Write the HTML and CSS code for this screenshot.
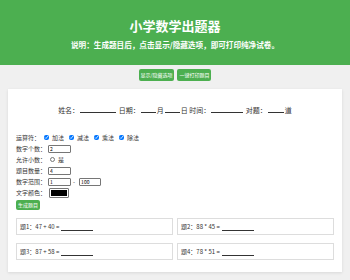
FILE: index.html
```
<!DOCTYPE html>
<html lang="zh-CN">
<head>
  <meta charset="utf-8">
  <meta name="viewport" content="width=device-width, initial-scale=1.0">
  <title>小学数学出题器</title>
  <link rel="stylesheet" href="styles.css">
</head>
<body>
  <div class="header">
    <h1>小学数学出题器</h1>
    <p>说明：生成题目后，点击显示/隐藏选项，即可打印纯净试卷。</p>
  </div>

  <div class="toolbar">
    <button class="button">显示/隐藏选项</button>
    <button class="button">一键打印题目</button>
  </div>

  <div class="card">
    <div class="info-line">
      姓名：<span class="blank w36"></span>
      日期：<span class="blank w15"></span>月<span class="blank w15"></span>日
      时间：<span class="blank w32"></span>
      对题：<span class="blank w16"></span>道
    </div>

    <div class="options">
      <div class="row">
        运算符：<label><input type="checkbox" checked>加法</label><label><input type="checkbox" checked>减法</label><label><input type="checkbox" checked>乘法</label><label><input type="checkbox" checked>除法</label>
      </div>
      <div class="row">数字个数：<input class="field" type="text" value="2"></div>
      <div class="row">允许小数：<label><input type="checkbox">是</label></div>
      <div class="row">题目数量：<input class="field" type="text" value="4"></div>
      <div class="row">数字范围：<input class="field" type="text" value="1"><span class="dash">-</span><input class="field small" type="text" value="100"></div>
      <div class="row">文字颜色：<input class="color" type="color" value="#000000"></div>
      <button class="button generate">生成题目</button>
    </div>

    <div class="problems">
      <div class="problem">题1：47 + 40 = <span class="blank w32"></span></div>
      <div class="problem">题2：88 * 45 = <span class="blank w32"></span></div>
      <div class="problem">题3：87 + 58 = <span class="blank w32"></span></div>
      <div class="problem">题4：78 * 51 = <span class="blank w32"></span></div>
    </div>
  </div>
</body>
</html>
```

FILE: styles.css
```
body {
  font-family: "Noto Sans CJK SC", "Noto Sans", sans-serif;
  margin: 0;
  padding: 0;
  background-color: #f0f0f0;
  color: #333;
}

.header {
  background-color: #4caf50;
  color: white;
  text-align: center;
  padding: 17px 0 14px;
}

.header h1 {
  font-size: 13px;
  line-height: 18px;
  margin: 0;
}

.header p {
  font-size: 7.6px;
  line-height: 12px;
  font-weight: bold;
  margin: 4px 0 0;
}

.toolbar {
  display: flex;
  justify-content: center;
  gap: 3px;
  margin-top: 4px;
}

.button {
  font-family: inherit;
  font-size: 5px;
  line-height: 8px;
  background-color: #4caf50;
  color: white;
  border: none;
  border-radius: 2px;
  padding: 2px 2px;
  cursor: pointer;
}

.card {
  background-color: white;
  margin: 8px 8px 8px;
  padding: 8px 8px 12px;
  box-shadow: 0 1px 3px rgba(0,0,0,0.1);
}

.info-line {
  font-size: 7px;
  line-height: 10px;
  text-align: center;
  margin-top: 8px;
}

.blank {
  display: inline-block;
  border-bottom: 1px solid #333;
  height: 7px;
  margin: 0 1px;
  vertical-align: baseline;
}

.w36 { width: 36px; }
.w32 { width: 32px; }
.w16 { width: 16px; }
.w15 { width: 15px; }

.options {
  margin-top: 17px;
  font-size: 6px;
}

.row {
  display: flex;
  align-items: center;
  height: 11px;
}

.row label {
  display: flex;
  align-items: center;
  margin-right: 1px;
}

.row input[type="checkbox"] {
  width: 5px;
  height: 5px;
  margin: 0 3px 0 4px;
}

.field {
  width: 23px;
  height: 8px;
  box-sizing: border-box;
  margin-left: 2px;
  padding: 0 1px;
  font-size: 5px;
  font-family: inherit;
  color: #000;
  border: 1px solid #767676;
  border-radius: 1px;
}

.field.small {
  width: 22px;
}

.dash {
  margin: 0 2px;
}

.color {
  width: 20px;
  height: 10px;
  margin-left: 3px;
  padding: 0;
  border: 1px solid #767676;
  border-radius: 1px;
  background: white;
}

.color::-webkit-color-swatch-wrapper {
  padding: 1px;
}

.color::-webkit-color-swatch {
  border: none;
}

.generate {
  margin-top: 2px;
  padding: 1px 2px;
}

.problems {
  display: grid;
  grid-template-columns: 1fr 1fr;
  gap: 8px 4px;
  margin-top: 8px;
}

.problem {
  border: 1px solid #ddd;
  height: 17px;
  box-sizing: border-box;
  padding: 0 3px;
  font-size: 6px;
  display: flex;
  align-items: center;
}

.problem .blank {
  margin-left: 2px;
}
```
